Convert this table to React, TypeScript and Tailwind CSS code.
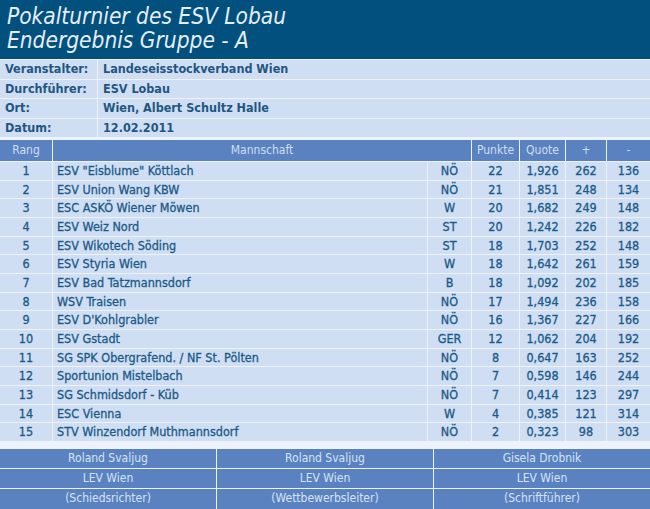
import React from 'react';

const info = [
  { label: 'Veranstalter:', value: 'Landeseisstockverband Wien' },
  { label: 'Durchführer:', value: 'ESV Lobau' },
  { label: 'Ort:', value: 'Wien, Albert Schultz Halle' },
  { label: 'Datum:', value: '12.02.2011' },
];

const rows = [
  { rang: 1, team: 'ESV "Eisblume" Köttlach', land: 'NÖ', punkte: 22, quote: '1,926', plus: 262, minus: 136 },
  { rang: 2, team: 'ESV Union Wang KBW', land: 'NÖ', punkte: 21, quote: '1,851', plus: 248, minus: 134 },
  { rang: 3, team: 'ESC ASKÖ Wiener Möwen', land: 'W', punkte: 20, quote: '1,682', plus: 249, minus: 148 },
  { rang: 4, team: 'ESV Weiz Nord', land: 'ST', punkte: 20, quote: '1,242', plus: 226, minus: 182 },
  { rang: 5, team: 'ESV Wikotech Söding', land: 'ST', punkte: 18, quote: '1,703', plus: 252, minus: 148 },
  { rang: 6, team: 'ESV Styria Wien', land: 'W', punkte: 18, quote: '1,642', plus: 261, minus: 159 },
  { rang: 7, team: 'ESV Bad Tatzmannsdorf', land: 'B', punkte: 18, quote: '1,092', plus: 202, minus: 185 },
  { rang: 8, team: 'WSV Traisen', land: 'NÖ', punkte: 17, quote: '1,494', plus: 236, minus: 158 },
  { rang: 9, team: "ESV D'Kohlgrabler", land: 'NÖ', punkte: 16, quote: '1,367', plus: 227, minus: 166 },
  { rang: 10, team: 'ESV Gstadt', land: 'GER', punkte: 12, quote: '1,062', plus: 204, minus: 192 },
  { rang: 11, team: 'SG SPK Obergrafend. / NF St. Pölten', land: 'NÖ', punkte: 8, quote: '0,647', plus: 163, minus: 252 },
  { rang: 12, team: 'Sportunion Mistelbach', land: 'NÖ', punkte: 7, quote: '0,598', plus: 146, minus: 244 },
  { rang: 13, team: 'SG Schmidsdorf - Küb', land: 'NÖ', punkte: 7, quote: '0,414', plus: 123, minus: 297 },
  { rang: 14, team: 'ESC Vienna', land: 'W', punkte: 4, quote: '0,385', plus: 121, minus: 314 },
  { rang: 15, team: 'STV Winzendorf Muthmannsdorf', land: 'NÖ', punkte: 2, quote: '0,323', plus: 98, minus: 303 },
];

const officials = [
  { name: 'Roland Svaljug', verein: 'LEV Wien', rolle: '(Schiedsrichter)' },
  { name: 'Roland Svaljug', verein: 'LEV Wien', rolle: '(Wettbewerbsleiter)' },
  { name: 'Gisela Drobnik', verein: 'LEV Wien', rolle: '(Schriftführer)' },
];

const cols = 'grid grid-cols-[52px_374px_43px_47px_45px_40px_1fr] gap-x-px';

export default function App() {
  return (
    <div className="w-[650px] h-[509px] overflow-hidden bg-[#eef3fa] text-[#1b5a8a] text-[12px] font-['DejaVu_Sans_Condensed','DejaVu_Sans',sans-serif]">
      {/* Kopf */}
      <header className="h-[59px] bg-[#02507e] px-[7px] pt-[4px] text-[#e6eef8] italic text-[22.5px] leading-[24px]">
        <div>Pokalturnier des ESV Lobau</div>
        <div>Endergebnis Gruppe - A</div>
      </header>

      {/* Veranstaltung */}
      <div className="mt-px flex flex-col gap-y-px">
        {info.map((i) => (
          <div key={i.label} className="grid grid-cols-[97px_1fr] gap-x-px h-[18.5px] text-[12.5px] font-bold text-[#1f5682]">
            <div className="bg-[#cfdef2] pl-[5px] leading-[18px]">{i.label}</div>
            <div className="bg-[#cfdef2] pl-[5px] leading-[18px]">{i.value}</div>
          </div>
        ))}
      </div>

      {/* Tabelle */}
      <div className="mt-[3px] flex flex-col gap-y-px">
        <div className={`${cols} h-[21px] text-[#d0def2] leading-[21px]`}>
          <div className="bg-[#5a82c1] text-center">Rang</div>
          <div className="bg-[#5a82c1] text-center col-span-2">Mannschaft</div>
          <div className="bg-[#5a82c1] text-center">Punkte</div>
          <div className="bg-[#5a82c1] text-center">Quote</div>
          <div className="bg-[#5a82c1] text-center">+</div>
          <div className="bg-[#5a82c1] text-center">-</div>
        </div>
        {rows.map((r) => (
          <div key={r.rang} className={`${cols} h-[17.67px] leading-[17.67px] text-[12.5px] [-webkit-text-stroke:0.3px_#1b5a8a]`}>
            <div className="bg-[#cfdef2] text-center">{r.rang}</div>
            <div className="bg-[#cfdef2] pl-[4px] whitespace-nowrap">{r.team}</div>
            <div className="bg-[#cfdef2] text-center">{r.land}</div>
            <div className="bg-[#cfdef2] text-center">{r.punkte}</div>
            <div className="bg-[#cfdef2] text-center">{r.quote}</div>
            <div className="bg-[#cfdef2] text-center">{r.plus}</div>
            <div className="bg-[#cfdef2] text-center">{r.minus}</div>
          </div>
        ))}
      </div>

      {/* Funktionäre */}
      <div className="mt-[8px] grid grid-cols-3 gap-px text-[#d6e2f4] text-center">
        {[0, 1, 2].map((row) =>
          officials.map((o, idx) => (
            <div key={`${row}-${idx}`} className="bg-[#5a82c1] h-[19.3px] leading-[19px]">
              {row === 0 ? o.name : row === 1 ? o.verein : o.rolle}
            </div>
          ))
        )}
      </div>
    </div>
  );
}
